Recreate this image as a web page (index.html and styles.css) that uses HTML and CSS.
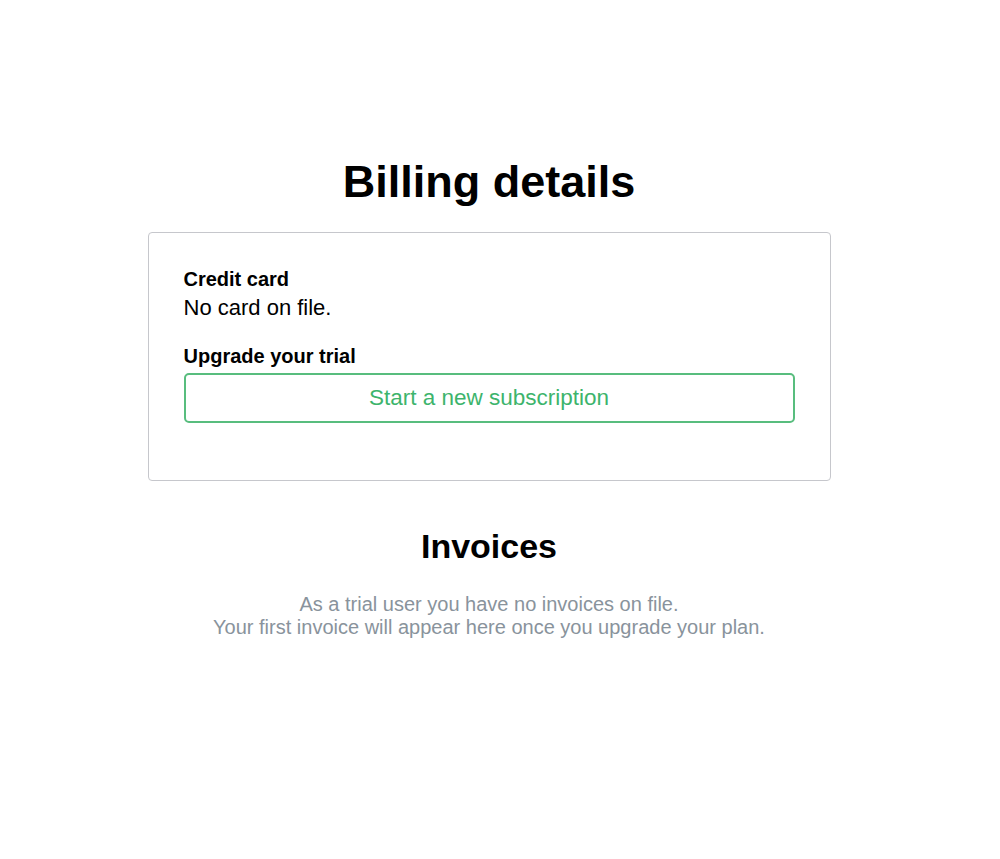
FILE: index.html
```html
<!DOCTYPE html>
<html lang="en">
<head>
    <meta charset="UTF-8">
    <meta name="viewport" content="width=device-width, initial-scale=1.0">
    <title>Billing details</title>
    <link rel="stylesheet" href="styles.css">
</head>
<body>
    <div class="page">
        <h1>Billing details</h1>
        <div class="card">
            <div class="field-label">Credit card</div>
            <p class="field-value">No card on file.</p>

            <div class="field-label upgrade-label">Upgrade your trial</div>
            <button class="subscribe-btn">Start a new subscription</button>
        </div>

        <h2>Invoices</h2>
        <p class="empty-text">
            As a trial user you have no invoices on file.<br>
            Your first invoice will appear here once you upgrade your plan.
        </p>
    </div>
</body>
</html>
```

FILE: styles.css
```css
:root {
    --text-color: #000000;
    --muted-color: #89939c;
    --border-color: #c6c7cc;
    --green: #3db46c;
    --green-border: #58bd7e;
}

* {
    margin: 0;
    padding: 0;
    box-sizing: border-box;
    font-family: 'Liberation Sans', Arial, sans-serif;
}

body {
    background-color: #ffffff;
    color: var(--text-color);
    padding-right: 22px;
}

.page {
    width: 683px;
    margin: 0 auto;
    padding-top: 156px;
}

h1 {
    text-align: center;
    font-size: 45px;
    font-weight: bold;
    line-height: 52px;
    margin-bottom: 24px;
}

.card {
    border: 1px solid var(--border-color);
    border-radius: 4px;
    padding: 34px 35px 57px 35px;
}

.field-label {
    font-size: 20px;
    font-weight: bold;
    line-height: 24px;
}

.field-value {
    font-size: 22px;
    line-height: 26px;
    margin-top: 4px;
}

.upgrade-label {
    margin-top: 23px;
    margin-bottom: 5px;
}

.subscribe-btn {
    display: block;
    width: 100%;
    height: 50px;
    background: #ffffff;
    border: 2px solid var(--green-border);
    border-radius: 5px;
    color: var(--green);
    font-size: 22.5px;
    cursor: pointer;
}

h2 {
    text-align: center;
    font-size: 34px;
    font-weight: bold;
    line-height: 40px;
    margin-top: 45px;
}

.empty-text {
    text-align: center;
    font-size: 20px;
    line-height: 23px;
    color: var(--muted-color);
    margin-top: 27px;
}
```
